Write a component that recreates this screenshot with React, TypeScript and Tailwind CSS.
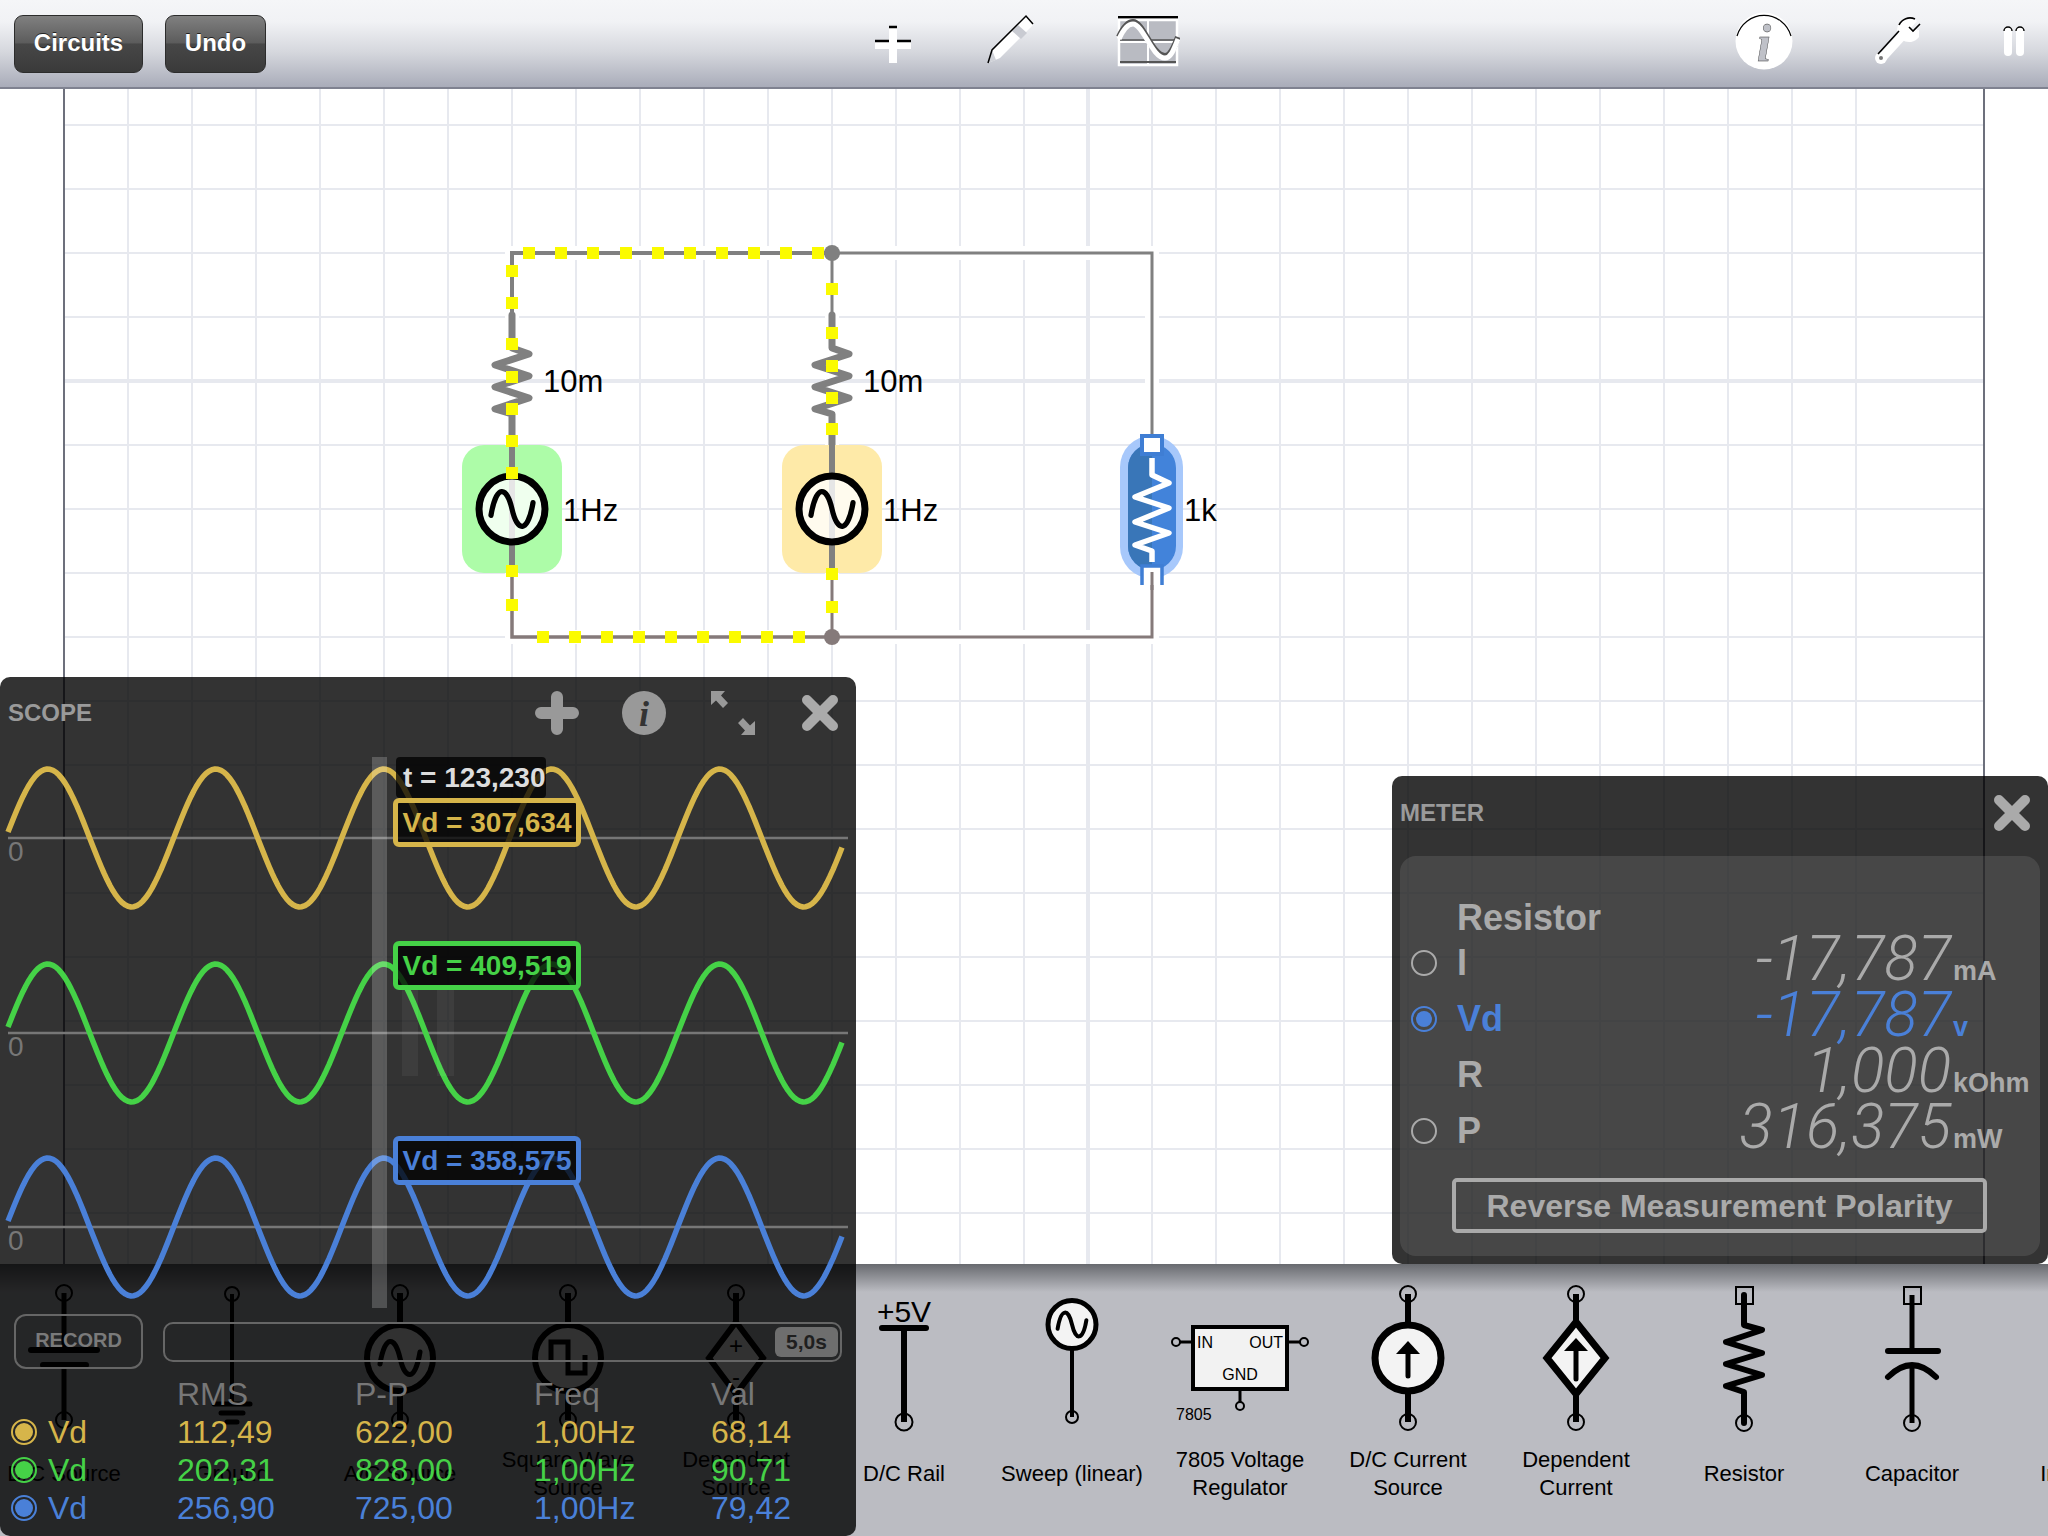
import React from 'react';

const sinePath = 'M-20 6C-15 -24 -5 -22 0 0S15 24 20 -6';

// one trace of the scope, period 168px
const wave = (cy: number) => {
  const pts: string[] = [];
  for (let x = 8; x <= 844; x += 3) {
    pts.push(`${x},${(cy - 69 * Math.sin((2 * Math.PI * (x - 5.7)) / 168)).toFixed(1)}`);
  }
  return pts.join(' ');
};

const Pin = ({ y, x = 84, r = 8 }: { y: number; x?: number; r?: number }) => (
  <circle cx={x} cy={y} r={r} fill="none" stroke="black" strokeWidth={2} />
);

const Line = ({ y1, y2, w = 6 }: { y1: number; y2: number; w?: number }) => (
  <line x1={84} x2={84} y1={y1} y2={y2} stroke="black" strokeWidth={w} />
);

const Plate = ({ y, x1, x2, w = 6 }: { y: number; x1: number; x2: number; w?: number }) => (
  <line x1={x1} x2={x2} y1={y} y2={y} stroke="black" strokeWidth={w} strokeLinecap="round" />
);

const SquarePin = () => <rect x={76} y={7} width={17} height={17} fill="none" stroke="black" strokeWidth={2} />;

const CurrentArrow = ({ top, bottom }: { top: number; bottom: number }) => (
  <g>
    <line x1={84} x2={84} y1={top + 8} y2={bottom} stroke="black" strokeWidth={5} strokeLinecap="round" />
    <polygon points={`84,${top} 72,${top + 13} 96,${top + 13}`} fill="black" />
  </g>
);

const icons: Record<string, React.ReactNode> = {
  dc: (
    <g>
      <Pin y={13} />
      <Pin y={140} />
      <Line y1={13} y2={70} w={5} />
      <Plate y={70} x1={51} x2={117} />
      <Plate y={85} x1={63} x2={106} />
      <Line y1={85} y2={140} w={5} />
    </g>
  ),
  ground: (
    <g>
      <Pin y={14} r={7} />
      <Line y1={14} y2={124} w={4} />
      <Plate y={124} x1={66} x2={102} w={5} />
      <Plate y={133} x1={73} x2={95} w={5} />
      <Plate y={142} x1={79} x2={89} w={5} />
    </g>
  ),
  ac: (
    <g>
      <Pin y={13} />
      <Pin y={140} />
      <Line y1={13} y2={45} />
      <Line y1={110} y2={140} />
      <circle cx={84} cy={78} r={33} fill="#f3f3f3" stroke="black" strokeWidth={6} />
      <path d={sinePath} transform="translate(84 78)" fill="none" stroke="black" strokeWidth={5} strokeLinecap="round" />
    </g>
  ),
  square: (
    <g>
      <Pin y={13} />
      <Pin y={140} />
      <Line y1={13} y2={45} />
      <Line y1={110} y2={140} />
      <circle cx={84} cy={78} r={33} fill="#f3f3f3" stroke="black" strokeWidth={6} />
      <path d="M67 82V62H84V93H101V75" fill="none" stroke="black" strokeWidth={5} />
    </g>
  ),
  depSource: (
    <g>
      <Pin y={13} />
      <Pin y={140} />
      <Line y1={13} y2={42} />
      <Line y1={114} y2={140} />
      <polygon points="84,42 111,78 84,114 57,78" fill="#f3f3f3" stroke="black" strokeWidth={6} />
      <text x={84} y={74} textAnchor="middle" fontSize={24}>+</text>
      <text x={84} y={105} textAnchor="middle" fontSize={24}>-</text>
    </g>
  ),
  rail: (
    <g>
      <text x={84} y={42} textAnchor="middle" fontSize={30}>+5V</text>
      <Plate y={48} x1={62} x2={106} />
      <Line y1={48} y2={142} />
      <Pin y={142} r={8.5} />
    </g>
  ),
  sweep: (
    <g>
      <Line y1={68} y2={137} w={4} />
      <Pin y={137} r={6} />
      <circle cx={84} cy={44.5} r={24} fill="#f3f3f3" stroke="black" strokeWidth={5} />
      <path d={sinePath} transform="translate(84 44.5) scale(0.72)" fill="none" stroke="black" strokeWidth={5.5} strokeLinecap="round" />
    </g>
  ),
  reg: (
    <g>
      <line x1={24} x2={37} y1={62} y2={62} stroke="black" strokeWidth={3} />
      <line x1={131} x2={144} y1={62} y2={62} stroke="black" strokeWidth={3} />
      <Line y1={109} y2={122} w={3} />
      <Pin x={20} y={62} r={4} />
      <Pin x={148} y={62} r={4} />
      <Pin y={126} r={4} />
      <rect x={37} y={47} width={94} height={62} fill="#f2f2f2" stroke="black" strokeWidth={4} />
      <text x={41} y={68} fontSize={16}>IN</text>
      <text x={127} y={68} fontSize={16} textAnchor="end">OUT</text>
      <text x={84} y={100} fontSize={16} textAnchor="middle">GND</text>
      <text x={20} y={140} fontSize={16}>7805</text>
    </g>
  ),
  current: (
    <g>
      <Pin y={14} />
      <Pin y={142} />
      <Line y1={14} y2={45} />
      <Line y1={110} y2={142} />
      <circle cx={84} cy={78} r={33} fill="#f3f3f3" stroke="black" strokeWidth={7} />
      <CurrentArrow top={61} bottom={96} />
    </g>
  ),
  depCurrent: (
    <g>
      <Pin y={14} />
      <Pin y={142} />
      <Line y1={14} y2={42} />
      <Line y1={114} y2={142} />
      <polygon points="84,42 113,78 84,114 55,78" fill="#f3f3f3" stroke="black" strokeWidth={7} />
      <CurrentArrow top={58} bottom={99} />
    </g>
  ),
  resistor: (
    <g>
      <SquarePin />
      <Pin y={143} />
      <polyline
        points="84,15 84,45 102,50 66,62 102,73 66,84 102,95 66,106 84,112 84,143"
        fill="none"
        stroke="black"
        strokeWidth={6}
        strokeLinejoin="round"
        strokeLinecap="round"
      />
    </g>
  ),
  capacitor: (
    <g>
      <SquarePin />
      <Pin y={143} />
      <Line y1={15} y2={71} w={5} />
      <Plate y={71} x1={60} x2={110} />
      <path d="M60 97Q84 73 108 97" fill="none" stroke="black" strokeWidth={6} strokeLinecap="round" />
      <Line y1={85} y2={143} w={5} />
    </g>
  ),
};

const paletteItems = [
  { key: 'dc', label: ['D/C Source'] },
  { key: 'ground', label: ['Ground'] },
  { key: 'ac', label: ['A/C Source'] },
  { key: 'square', label: ['Square Wave', 'Source'] },
  { key: 'depSource', label: ['Dependent', 'Source'] },
  { key: 'rail', label: ['D/C Rail'] },
  { key: 'sweep', label: ['Sweep (linear)'] },
  { key: 'reg', label: ['7805 Voltage', 'Regulator'] },
  { key: 'current', label: ['D/C Current', 'Source'] },
  { key: 'depCurrent', label: ['Dependent', 'Current'] },
  { key: 'resistor', label: ['Resistor'] },
  { key: 'capacitor', label: ['Capacitor'] },
  { key: 'inductor', label: ['Inductor'] },
];

const yellowDots: [number, number][] = [
  ...[529, 561, 593, 626, 658, 690, 722, 754, 786, 818].map((x): [number, number] => [x, 253]),
  ...[271, 303, 344, 377, 409, 441, 473, 571, 605].map((y): [number, number] => [512, y]),
  ...[289, 333, 366, 398, 429, 574, 607].map((y): [number, number] => [832, y]),
  ...[543, 575, 607, 639, 671, 703, 735, 767, 799].map((x): [number, number] => [x, 637]),
];

const gridX = Array.from({ length: 28 }, (_, i) => 128 + i * 64);
const gridY = Array.from({ length: 18 }, (_, i) => 125 + i * 64);

const Circuit = () => (
  <svg className="absolute left-0 top-0" width={2048} height={1175} viewBox="0 89 2048 1175">
    {gridX.map((x) => (
      <line key={x} x1={x} x2={x} y1={89} y2={1264} stroke="#e7e9ef" strokeWidth={x === 1088 ? 4 : 2} />
    ))}
    {gridY.map((y) => (
      <line key={y} x1={64} x2={1984} y1={y} y2={y} stroke="#e7e9ef" strokeWidth={y === 381 ? 4 : 2} />
    ))}
    <line x1={64} x2={64} y1={89} y2={1264} stroke="#6d707c" strokeWidth={2} />
    <line x1={1984} x2={1984} y1={89} y2={1264} stroke="#6d707c" strokeWidth={2} />

    {/* white halo the wires leave in the grid */}
    <path d="M512 253H1152V637H512ZM832 253V637" fill="none" stroke="white" strokeWidth={14} />

    {/* wires */}
    <path d="M512 315V253H832" fill="none" stroke="#808080" strokeWidth={4} />
    <path d="M832 253H1152V435" fill="none" stroke="#808080" strokeWidth={3} />
    <path d="M832 253V315" fill="none" stroke="#808080" strokeWidth={3} />
    <path d="M512 573V637H832" fill="none" stroke="#857a7a" strokeWidth={3.5} />
    <path d="M832 637H1152V580" fill="none" stroke="#857a7a" strokeWidth={3} />
    <path d="M832 573V637" fill="none" stroke="#857a7a" strokeWidth={3} />
    <circle cx={832} cy={253} r={8} fill="#808080" />
    <circle cx={832} cy={637} r={8} fill="#857a7a" />

    {[512, 832].map((x) => (
      <g key={x}>
        <polyline
          points={`${x},315 ${x},348 ${x + 17},354 ${x - 17},365 ${x + 17},376 ${x - 17},387 ${x + 17},398 ${x - 17},409 ${x},414 ${x},445`}
          fill="none"
          stroke="#808080"
          strokeWidth={7}
          strokeLinejoin="round"
          strokeLinecap="round"
        />
        <rect x={x - 50} y={445} width={100} height={128} rx={22} fill={x === 512 ? '#adfca8' : '#feeaa8'} />
        <line x1={x} x2={x} y1={445} y2={573} stroke="#808080" strokeWidth={6} />
        <circle cx={x} cy={509} r={33} fill="white" fillOpacity={0.8} stroke="black" strokeWidth={7} />
        <path d={sinePath} transform={`translate(${x} 509) scale(1.05)`} fill="none" stroke="black" strokeWidth={5} strokeLinecap="round" />
        <text x={x + 31} y={392} fontSize={31}>10m</text>
        <text x={x + 51} y={521} fontSize={31}>1Hz</text>
      </g>
    ))}

    {/* selected 1k resistor */}
    <rect x={1120} y={436} width={63} height={142} rx={31} fill="#a7c8fb" />
    <rect x={1128} y={444} width={48} height={126} rx={24} fill="#4283da" />
    <path d="M1128 468A24 24 0 0 1 1152 444V570A24 24 0 0 1 1128 546Z" fill="#3976b8" />
    <polyline
      points="1152,458 1152,475 1169,483 1135,497 1169,508 1135,522 1169,533 1135,545 1152,551 1152,562"
      fill="none"
      stroke="white"
      strokeWidth={5.5}
      strokeLinejoin="round"
    />
    <rect x={1142} y={436} width={20} height={18} fill="white" stroke="#3f7ed4" strokeWidth={4} />
    <rect x={1142} y={567} width={20} height={18} fill="white" />
    <path d="M1142 585V566H1162V585" fill="none" stroke="#3f7ed4" strokeWidth={3.5} />
    <line x1={1152} x2={1152} y1={572} y2={590} stroke="#857a7a" strokeWidth={3} />
    <text x={1184} y={521} fontSize={31}>1k</text>

    {yellowDots.map(([x, y]) => (
      <rect key={`${x}-${y}`} x={x - 6} y={y - 6} width={12} height={12} fill="#fbfb00" />
    ))}
  </svg>
);

const ToolButton = ({ label, className }: { label: string; className: string }) => (
  <button className={`h-[58px] rounded-[9px] border border-[#2c2c2c] pb-[2px] bg-[linear-gradient(#808080,#5c5c5c_48%,#474747_50%,#3a3a3a)] text-[24px] font-bold text-white [text-shadow:0_-1px_0_#222] ${className}`}>
    {label}
  </button>
);

const Toolbar = () => (
  <div className="relative z-10 flex h-[89px] shrink-0 items-center border-b-2 border-[#7f8290] bg-[linear-gradient(#f5f6f8,#f1f2f5_25%,#d5d7dd_60%,#a9acb9)]">
    <ToolButton label="Circuits" className="ml-[14px] w-[129px]" />
    <ToolButton label="Undo" className="ml-[22px] w-[101px]" />
    {/* add */}
    <svg className="ml-[606px]" width={40} height={87} viewBox="872 0 40 87">
      <path d="M889 28H897V41H911V49H897V63H889V49H875V41H889Z" fill="white" />
      <path d="M889 27H897M875 41H889M897 41H911" stroke="black" strokeWidth={2.5} />
    </svg>
    {/* pencil */}
    <svg className="ml-[73px]" width={55} height={87} viewBox="985 0 55 87">
      <path d="M1026 17L1033 25L1000 58L988 63L992 50Z" fill="white" />
      <path d="M1018 25L1027 33L1021 39L1012 31Z" fill="#c9cbd2" />
      <path d="M988 63L992 50L996 60Z" fill="#d0d2d8" />
      <path d="M988 63L992 50L1026 16L1033 24" fill="none" stroke="black" strokeWidth={1.5} />
    </svg>
    {/* scope */}
    <svg className="ml-[76px]" width={64} height={87} viewBox="1116 0 64 87">
      <rect x={1118} y={16} width={60} height={2.5} fill="black" />
      <rect x={1119} y={20} width={58} height={45} fill="#b9bbc2" stroke="white" strokeWidth={2.5} />
      <path d="M1148 20V65M1120 42H1176" stroke="white" strokeWidth={2} />
      <path d="M1120 40H1176" stroke="#555" strokeWidth={1.5} />
      <path d="M1120 62H1176" stroke="#555" strokeWidth={2} />
      <path d="M1119 38C1124 27 1128 23 1133 23C1143 23 1152 57 1165 57C1171 57 1174 48 1178 38" fill="none" stroke="#555" strokeWidth={6} transform="translate(0 -1)" />
      <path d="M1119 38C1124 27 1128 23 1133 23C1143 23 1152 57 1165 57C1171 57 1174 48 1178 38" fill="none" stroke="white" strokeWidth={5} transform="translate(0 1)" />
    </svg>
    {/* info */}
    <svg className="ml-[554px]" width={60} height={87} viewBox="1734 0 60 87">
      <circle cx={1764} cy={41} r={28.5} fill="white" />
      <path d="M1737 36A28 28 0 0 1 1791 36" fill="none" stroke="black" strokeWidth={1.2} />
      <text x={1764} y={61} textAnchor="middle" fontSize={52} fontStyle="italic" fontWeight={700} fill="#bfc1c8" stroke="#333" strokeWidth={0.4} className="font-['Liberation_Serif',serif]">i</text>
    </svg>
    {/* wrench */}
    <svg className="ml-[81px]" width={50} height={87} viewBox="1875 0 50 87">
      <path d="M1882 58L1903 35" stroke="white" strokeWidth={9} strokeLinecap="round" />
      <circle cx={1881} cy={58} r={6} fill="white" />
      <circle cx={1881} cy={58} r={2} fill="#777" />
      <path d="M1917 21A12 12 0 1 0 1919 37L1919 30L1910 29Z" fill="white" />
      <path d="M1878 54L1899 31M1915 19A12 12 0 0 0 1899 25M1909 27L1913 31L1920 24" fill="none" stroke="black" strokeWidth={1.6} />
    </svg>
    {/* pause */}
    <svg className="ml-[75px]" width={30} height={87} viewBox="2000 0 30 87">
      <rect x={2004} y={27} width={8} height={29} rx={4} fill="white" />
      <rect x={2016} y={27} width={8} height={29} rx={4} fill="white" />
      <path d="M2004 31A4 4 0 0 1 2012 31M2016 31A4 4 0 0 1 2024 31" fill="none" stroke="black" strokeWidth={1.4} />
    </svg>
  </div>
);

const Palette = () => (
  <div className="flex h-[272px] shrink-0 -ml-[20px] w-[2068px] overflow-hidden bg-[linear-gradient(#686a6f,#bbbcc2_28px)] pt-[16px]">
    {paletteItems.map((item) => (
      <div key={item.key} className="flex w-[168px] shrink-0 flex-col items-center text-black">
        <svg width={168} height={166} viewBox="0 0 168 166">
          {icons[item.key]}
        </svg>
        <div className="flex h-[56px] flex-col items-center justify-center whitespace-nowrap text-center text-[22px] leading-[28px]">
          {item.label.map((l) => (
            <span key={l}>{l}</span>
          ))}
        </div>
      </div>
    ))}
  </div>
);

const traces = [
  { color: '#d6b54a', cy: 838, label: 'Vd = 307,634', top: 'top-[49px]', box: 'border-[#d6b54a] text-[#d6b54a]' },
  { color: '#45d247', cy: 1033, label: 'Vd = 409,519', top: 'top-[192px]', box: 'border-[#45d247] text-[#45d247]' },
  { color: '#4a80d8', cy: 1227, label: 'Vd = 358,575', top: 'top-[387px]', box: 'border-[#4a80d8] text-[#4a80d8]' },
];

const rows = [
  { cls: 'text-[#d6b54a]', dot: 'border-[#d6b54a] after:bg-[#d6b54a]', v: ['112,49', '622,00', '1,00Hz', '68,14'] },
  { cls: 'text-[#45d247]', dot: 'border-[#45d247] after:bg-[#45d247]', v: ['202,31', '828,00', '1,00Hz', '90,71'] },
  { cls: 'text-[#4a80d8]', dot: 'border-[#4a80d8] after:bg-[#4a80d8]', v: ['256,90', '725,00', '1,00Hz', '79,42'] },
];

const ScopePanel = () => (
  <div className="absolute left-0 top-[677px] z-20 flex h-[859px] w-[856px] flex-col rounded-[10px] bg-black/80">
    {/* header */}
    <div className="flex h-[72px] shrink-0 items-center pl-[8px]">
      <span className="w-[527px] text-[24px] font-bold text-[#9a9a9a]">SCOPE</span>
      <svg width={44} height={44} viewBox="0 0 44 44">
        <path d="M22 6V38M6 22H38" stroke="#999" strokeWidth={12} strokeLinecap="round" />
      </svg>
      <svg className="ml-[43px]" width={44} height={44} viewBox="0 0 44 44">
        <circle cx={22} cy={22} r={22} fill="#999" />
        <text x={22} y={35} textAnchor="middle" fontSize={36} fontStyle="italic" fontWeight={700} fill="#333" className="font-['Liberation_Serif',serif]">i</text>
      </svg>
      <svg className="ml-[44px]" width={46} height={46} viewBox="0 0 46 46">
        <path d="M1 1H15L11 5.5L18 13L13 18L6 10.5L1 15Z" fill="#999" />
        <path d="M45 45H31L35 40.5L28 33L33 28L40 35.5L45 31Z" fill="#999" />
      </svg>
      <svg className="ml-[46px]" width={36} height={36} viewBox="0 0 36 36">
        <path d="M5 5L31 31M31 5L5 31" stroke="#aaa" strokeWidth={10} strokeLinecap="round" />
      </svg>
    </div>

    {/* traces */}
    <div className="relative h-[565px] shrink-0">
      <svg className="absolute left-0 top-0 overflow-visible" width={856} height={565} viewBox="0 749 856 565">
        {traces.map((t) => (
          <g key={t.cy}>
            <line x1={8} x2={848} y1={t.cy} y2={t.cy} stroke="#777" strokeWidth={2.5} />
            <text x={8} y={t.cy + 23} fontSize={28} fill="#777">0</text>
            <polyline points={wave(t.cy)} fill="none" stroke={t.color} strokeWidth={5.5} strokeLinejoin="round" />
          </g>
        ))}
        <rect x={372} y={757} width={15} height={551} fill="white" fillOpacity={0.2} />
        <rect x={402} y={990} width={16} height={86} fill="white" fillOpacity={0.05} />
        <rect x={437} y={990} width={17} height={86} fill="white" fillOpacity={0.05} />
      </svg>
      <div className="absolute left-[396px] top-[8px] flex h-[41px] w-[150px] items-center rounded-[4px] bg-black/75 pl-[7px] text-[28px] font-bold text-[#ddd]">
        t = 123,230
      </div>
      {traces.map((t) => (
        <div
          key={t.cy}
          className={`absolute left-[393px] flex h-[49px] w-[188px] items-center justify-center rounded-[6px] border-[5px] bg-black/75 text-[28px] font-bold ${t.top} ${t.box}`}
        >
          {t.label}
        </div>
      ))}
    </div>

    {/* record and time slider */}
    <div className="flex h-[59px] shrink-0 items-start pl-[14px]">
      <button className="h-[55px] w-[129px] rounded-[12px] border-2 border-[#666] pb-[4px] text-[20px] font-bold text-[#7a7a7a]">RECORD</button>
      <div className="ml-[20px] mt-[8px] flex h-[40px] w-[679px] items-center justify-end rounded-[10px] border-2 border-[#666] pr-[2px]">
        <span className="flex h-[30px] w-[63px] items-center justify-center rounded-[6px] bg-[#6e6e6e] text-[21px] font-bold text-[#1f1f1f]">5,0s</span>
      </div>
    </div>

    {/* readings */}
    <div className="grid grid-cols-[177px_178px_179px_177px_auto] text-[32px] leading-[38px]">
      <div className="h-[40px]" />
      {['RMS', 'P-P', 'Freq', 'Val'].map((h) => (
        <div key={h} className="h-[40px] leading-[43px] text-[#777]">{h}</div>
      ))}
      {rows.map((r, i) => (
        <React.Fragment key={i}>
          <div className={`flex h-[38px] items-center pl-[11px] ${r.cls}`}>
            <span className={`relative h-[26px] w-[26px] rounded-full border-2 after:absolute after:left-[2px] after:top-[2px] after:h-[18px] after:w-[18px] after:rounded-full ${r.dot}`} />
            <span className="ml-[11px]">Vd</span>
          </div>
          {r.v.map((v, j) => (
            <div key={j} className={`h-[38px] ${r.cls}`}>{v}</div>
          ))}
        </React.Fragment>
      ))}
    </div>
  </div>
);

const meterRows = [
  { name: 'I', value: '-17,787', unit: 'mA', radio: true },
  { name: 'Vd', value: '-17,787', unit: 'v', radio: true, active: true },
  { name: 'R', value: '1,000', unit: 'kOhm', radio: false },
  { name: 'P', value: '316,375', unit: 'mW', radio: true },
];

const MeterPanel = () => (
  <div className="absolute left-[1392px] top-[776px] z-20 flex h-[488px] w-[656px] flex-col rounded-[10px] bg-black/80">
    <div className="flex h-[74px] shrink-0 items-center justify-between pl-[8px] pr-[18px]">
      <span className="text-[24px] font-bold text-[#9a9a9a]">METER</span>
      <svg width={36} height={36} viewBox="0 0 36 36">
        <path d="M5 5L31 31M31 5L5 31" stroke="#aaa" strokeWidth={10} strokeLinecap="round" />
      </svg>
    </div>
    <div className="mx-[8px] mt-[6px] h-[400px] rounded-[16px] bg-white/10 pt-[44px]">
      <div className="h-[35px] pl-[57px] text-[36px] font-bold leading-[35px] text-[#aaa]">Resistor</div>
      {meterRows.map((r) => (
        <div key={r.name} className={`flex h-[56px] items-center pl-[11px] ${r.active ? 'text-[#4a80d8]' : 'text-[#aaa]'}`}>
          <span className="flex h-[26px] w-[26px] items-center justify-center">
            {r.radio && (
              <span className={`flex h-[26px] w-[26px] items-center justify-center rounded-full border-2 ${r.active ? 'border-[#4a80d8]' : 'border-[#aaa]'}`}>
                {r.active && <span className="h-[16px] w-[16px] rounded-full bg-[#4a80d8]" />}
              </span>
            )}
          </span>
          <span className="ml-[20px] flex-1 text-[36px] font-bold">{r.name}</span>
          <span className="flex -translate-y-[4px] items-baseline">
            <span className="w-[240px] text-right font-['Roboto',sans-serif] text-[62px] font-light italic leading-none">{r.value}</span>
            <span className="ml-[2px] w-[87px] text-[27px] font-bold leading-none">{r.unit}</span>
          </span>
        </div>
      ))}
      <button className="ml-[52px] mt-[19px] h-[55px] w-[535px] rounded-[5px] border-[4px] border-[#aaa] text-[32px] font-bold text-[#aaa]">
        Reverse Measurement Polarity
      </button>
    </div>
  </div>
);

export default function App() {
  return (
    <div className="relative flex h-[1536px] w-[2048px] flex-col overflow-hidden bg-white font-['Liberation_Sans',sans-serif]">
      <Toolbar />
      <div className="relative flex-1">
        <Circuit />
      </div>
      <Palette />
      <ScopePanel />
      <MeterPanel />
    </div>
  );
}
